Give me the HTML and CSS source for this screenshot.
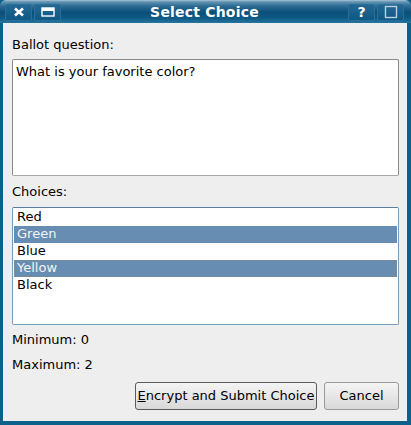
FILE: index.html
```html
<!DOCTYPE html>
<html>
<head>
<meta charset="utf-8">
<link rel="stylesheet" href="styles.css">
</head>
<body>
<div class="window">
  <div class="titlebar">
    <div class="tb-group">
      <div class="tb-btn"><svg width="12" height="10" viewBox="0 0 12 10"><path d="M2 1.5 L10 8.5 M10 1.5 L2 8.5" stroke="#fff" stroke-width="2.6"/></svg></div>
      <div class="tb-btn"><svg width="14" height="10" viewBox="0 0 14 10"><rect x="1" y="1" width="12" height="8" fill="none" stroke="#fff" stroke-width="1.4"/><rect x="1" y="1" width="12" height="3" fill="#fff"/></svg></div>
    </div>
    <div class="title">Select Choice</div>
    <div class="tb-group">
      <div class="tb-btn help">?</div>
      <div class="tb-btn"><svg width="14" height="14" viewBox="0 0 14 14"><rect x="1.5" y="1.5" width="11" height="11" fill="none" stroke="#b9d0de" stroke-width="1.4"/></svg></div>
    </div>
  </div>
  <div class="content">
    <div class="label first">Ballot question:</div>
    <div class="question">What is your favorite color?</div>
    <div class="label choices-label">Choices:</div>
    <div class="list">
      <div class="item">Red</div>
      <div class="item sel">Green</div>
      <div class="item">Blue</div>
      <div class="item sel focus">Yellow</div>
      <div class="item">Black</div>
    </div>
    <div class="info min">Minimum: 0</div>
    <div class="info">Maximum: 2</div>
    <div class="buttons">
      <div class="btn primary"><u>E</u>ncrypt and Submit Choice</div>
      <div class="btn cancel">Cancel</div>
    </div>
  </div>
</div>
</body>
</html>
```

FILE: styles.css
```css
html, body {
  margin: 0;
  padding: 0;
}
body {
  width: 411px;
  height: 425px;
  overflow: hidden;
  font-family: "DejaVu Sans", sans-serif;
  font-size: 13px;
  color: #000;
}
.window {
  width: 411px;
  height: 425px;
  background: #0b6189;
  display: flex;
  flex-direction: column;
  box-sizing: border-box;
}
.titlebar {
  height: 23px;
  flex: none;
  display: flex;
  align-items: center;
  padding: 1px 7px 0 5px;
  box-sizing: border-box;
  background: linear-gradient(#a9c3d4 0, #5f91b1 2px, #2d6d95 6px, #0b4f78 12px, #0d5a84 18px, #2575a0 23px);
  border-radius: 6px 6px 0 0;
}
.tb-group {
  display: flex;
  gap: 2px;
  flex: none;
}
.tb-btn {
  width: 27px;
  height: 17px;
  box-sizing: border-box;
  border: 1px solid #2b6f98;
  border-radius: 2px;
  background: linear-gradient(#246894, #0d5884);
  display: flex;
  align-items: center;
  justify-content: center;
}
.tb-btn.help {
  color: #fff;
  font-weight: bold;
  font-size: 14px;
  line-height: 1;
}
.title {
  flex: 1;
  text-align: center;
  color: #fff;
  font-weight: bold;
  font-size: 14px;
  letter-spacing: 0.2px;
  margin-top: -1px;
}
.content {
  flex: 1;
  margin: 0 4px 4px 3px;
  background: #eeeeee;
  padding: 0 8px 0 9px;
  display: flex;
  flex-direction: column;
}
.label {
  height: 17px;
  line-height: 17px;
}
.label.first {
  margin-top: 13px;
}
.question {
  margin-top: 6px;
  height: 117px;
  box-sizing: border-box;
  border: 1px solid #8a8a8a;
  border-bottom-color: #a8a8a8;
  border-radius: 2px;
  background: #fff;
  padding: 3px 3px;
  line-height: 17px;
}
.choices-label {
  margin-top: 7px;
}
.list {
  margin-top: 7px;
  height: 118px;
  box-sizing: border-box;
  border: 1px solid #7b9bbb;
  border-top-color: #5d7d9c;
  border-radius: 2px;
  background: #fff;
  padding: 1px 1px;
}
.item {
  height: 17px;
  line-height: 16px;
  padding-left: 3px;
}
.item.sel {
  background: #678db2;
  color: #f4f4f4;
}
.item.focus {
  outline: 1px dotted #7f8a8c;
  outline-offset: -1px;
}
.info {
  margin-top: 8px;
  height: 17px;
  line-height: 17px;
}
.info.min {
  margin-top: 6px;
}
.buttons {
  display: flex;
  justify-content: flex-end;
  gap: 7px;
  margin-top: 9px;
}
.btn {
  height: 28px;
  box-sizing: border-box;
  border: 1px solid #9a9a9a;
  border-radius: 3px;
  background: linear-gradient(#f4f4f4, #e4e4e4 60%, #d8d8d8);
  line-height: 26px;
  text-align: center;
}
.btn.primary {
  width: 182px;
  border-color: #5a5a5a;
}
.btn.cancel {
  width: 75px;
}
```
